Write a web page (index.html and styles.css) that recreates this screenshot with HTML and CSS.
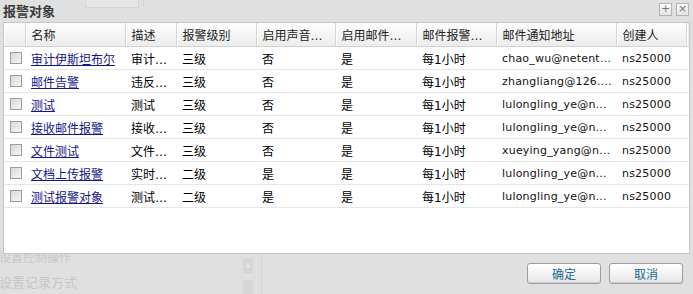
FILE: index.html
```html
<!DOCTYPE html>
<html lang="zh-CN">

<head>
    <meta charset="UTF-8">
    <title>报警对象</title>
    <link rel="stylesheet" href="styles.css">
</head>

<body>
    <!-- dimmed page behind the dialog -->
    <div class="backdrop">
        <div class="ghost-input"></div>
        <div class="ghost-line"></div>
        <div class="ghost-text ghost-ctrl">设置控制操作</div>
        <div class="ghost-text ghost-log">设置记录方式</div>
        <div class="ghost-scroll ghost-up">&#9650;</div>
        <div class="ghost-scroll ghost-thumb"></div>
        <div class="ghost-divider"></div>
    </div>

    <div class="dialog">
        <!-- Title Bar -->
        <div class="titlebar">
            <span class="title">报警对象</span>
            <div class="tools">
                <span class="tool">+</span>
                <span class="tool">&#215;</span>
            </div>
        </div>

        <!-- Alarm Object Grid -->
        <div class="grid">
            <table class="grid-table">
                <colgroup>
                    <col class="c-check">
                    <col class="c-name">
                    <col class="c-desc">
                    <col class="c-level">
                    <col class="c-sound">
                    <col class="c-mail">
                    <col class="c-freq">
                    <col class="c-addr">
                    <col class="c-owner">
                    <col>
                </colgroup>
                <thead>
                    <tr>
                        <th></th>
                        <th>名称</th>
                        <th>描述</th>
                        <th>报警级别</th>
                        <th>启用声音报警</th>
                        <th>启用邮件报警</th>
                        <th>邮件报警频率</th>
                        <th>邮件通知地址</th>
                        <th>创建人</th>
                        <th class="filler"></th>
                    </tr>
                </thead>
                <tbody>
                    <tr>
                        <td><span class="check"></span></td>
                        <td><a href="#">审计伊斯坦布尔</a></td>
                        <td>审计伊斯坦布尔</td>
                        <td>三级</td>
                        <td>否</td>
                        <td>是</td>
                        <td>每1小时</td>
                        <td class="en">chao_wu@netentsec.com</td>
                        <td class="en">ns25000</td>
                        <td></td>
                    </tr>
                    <tr>
                        <td><span class="check"></span></td>
                        <td><a href="#">邮件告警</a></td>
                        <td>违反规则</td>
                        <td>三级</td>
                        <td>否</td>
                        <td>是</td>
                        <td>每1小时</td>
                        <td class="en">zhangliang@126.com</td>
                        <td class="en">ns25000</td>
                        <td></td>
                    </tr>
                    <tr>
                        <td><span class="check"></span></td>
                        <td><a href="#">测试</a></td>
                        <td>测试</td>
                        <td>三级</td>
                        <td>否</td>
                        <td>是</td>
                        <td>每1小时</td>
                        <td class="en">lulongling_ye@netentsec.com</td>
                        <td class="en">ns25000</td>
                        <td></td>
                    </tr>
                    <tr>
                        <td><span class="check"></span></td>
                        <td><a href="#">接收邮件报警</a></td>
                        <td>接收邮件</td>
                        <td>三级</td>
                        <td>否</td>
                        <td>是</td>
                        <td>每1小时</td>
                        <td class="en">lulongling_ye@netentsec.com</td>
                        <td class="en">ns25000</td>
                        <td></td>
                    </tr>
                    <tr>
                        <td><span class="check"></span></td>
                        <td><a href="#">文件测试</a></td>
                        <td>文件测试</td>
                        <td>三级</td>
                        <td>否</td>
                        <td>是</td>
                        <td>每1小时</td>
                        <td class="en">xueying_yang@netentsec.com</td>
                        <td class="en">ns25000</td>
                        <td></td>
                    </tr>
                    <tr>
                        <td><span class="check"></span></td>
                        <td><a href="#">文档上传报警</a></td>
                        <td>实时报警</td>
                        <td>二级</td>
                        <td>是</td>
                        <td>是</td>
                        <td>每1小时</td>
                        <td class="en">lulongling_ye@netentsec.com</td>
                        <td class="en">ns25000</td>
                        <td></td>
                    </tr>
                    <tr>
                        <td><span class="check"></span></td>
                        <td><a href="#">测试报警对象</a></td>
                        <td>测试报警</td>
                        <td>二级</td>
                        <td>是</td>
                        <td>是</td>
                        <td>每1小时</td>
                        <td class="en">lulongling_ye@netentsec.com</td>
                        <td class="en">ns25000</td>
                        <td></td>
                    </tr>
                </tbody>
            </table>
        </div>

        <!-- Footer Buttons -->
        <div class="footer">
            <button class="btn">确定</button>
            <button class="btn">取消</button>
        </div>
    </div>
</body>

</html>
```

FILE: styles.css
```css
/* General Styles */
body {
    margin: 0;
    width: 693px;
    height: 294px;
    overflow: hidden;
    background-color: #e0e0e0;
    font-family: "DejaVu Sans", "Noto Sans CJK SC", sans-serif;
    font-size: 12px;
    color: #000;
    position: relative;
}

/* Backdrop (page dimmed behind the dialog) */
.backdrop {
    position: absolute;
    inset: 0;
    color: #c6c6c6;
}

.ghost-input {
    position: absolute;
    left: 85px;
    top: -4px;
    width: 52px;
    height: 10px;
    border: 1px solid #d4d4d4;
    background-color: #e6e6e6;
}

.ghost-line {
    position: absolute;
    left: 143px;
    top: 0;
    width: 1px;
    height: 6px;
    background-color: #d2d2d2;
}

.ghost-text {
    position: absolute;
    left: -1px;
    font-family: "Noto Sans CJK SC", sans-serif;
    white-space: nowrap;
}

.ghost-ctrl {
    top: 248px;
    font-size: 12px;
}

.ghost-log {
    top: 272px;
    font-size: 13px;
}

.ghost-scroll {
    position: absolute;
    left: 243px;
    width: 10px;
    background-color: #d6d6d6;
    color: #e4e4e4;
    font-size: 7px;
    text-align: center;
}

.ghost-up {
    top: 258px;
    height: 15px;
    line-height: 15px;
}

.ghost-thumb {
    top: 280px;
    height: 14px;
}

.ghost-divider {
    position: absolute;
    left: 261px;
    top: 254px;
    width: 1px;
    height: 40px;
    background-color: #d4d4d4;
}

/* Dialog */
.dialog {
    position: relative;
    display: flex;
    flex-direction: column;
    height: 294px;
}

.titlebar {
    height: 22px;
    display: flex;
    align-items: center;
    justify-content: space-between;
    padding: 0 4px 0 3px;
}

.title {
    font-family: "Noto Sans CJK SC", sans-serif;
    font-weight: bold;
    font-size: 13px;
    color: #3a3a3a;
    margin-top: -2px;
}

.tools {
    display: flex;
    gap: 4px;
    margin-top: -3px;
}

.tool {
    width: 11px;
    height: 11px;
    border: 1px solid #b4b4b4;
    background: linear-gradient(#fafafa, #e4e4e4);
    color: #777;
    font-family: "DejaVu Sans", sans-serif;
    font-size: 11px;
    line-height: 10px;
    text-align: center;
}

/* Grid */
.grid {
    margin: 0 3px;
    height: 230px;
    border: 1px solid #c6c6c6;
    background-color: #fff;
    overflow: hidden;
}

.grid-table {
    width: 100%;
    border-collapse: collapse;
    table-layout: fixed;
}

.c-check { width: 21px; }
.c-name { width: 100px; }
.c-desc { width: 51px; }
.c-level { width: 80px; }
.c-sound { width: 79px; }
.c-mail { width: 81px; }
.c-freq { width: 80px; }
.c-addr { width: 120px; }
.c-owner { width: 70px; }

.grid-table th,
.grid-table td {
    padding: 0 4px 0 6px;
    white-space: nowrap;
    overflow: hidden;
    text-overflow: ellipsis;
    text-align: left;
}

.grid-table th {
    height: 23px;
    font-weight: normal;
    color: #222;
    background: linear-gradient(#fdfdfd, #ececec);
    border-right: 1px solid #d6d6d6;
    border-bottom: 1px solid #d2d2d2;
    box-shadow: inset 1px 0 0 #fff;
}

.grid-table th.filler {
    border-right: none;
    background: #f0f0f0;
}

.grid-table td {
    height: 22px;
    border-bottom: 1px solid #e6e6e6;
}

.grid-table td.en {
    font-size: 11px;
    letter-spacing: 0.2px;
    color: #111;
}

.grid-table a {
    color: #14148c;
    text-decoration: underline;
}

.check {
    display: block;
    width: 10px;
    height: 10px;
    border: 1px solid #9c9c9c;
    background: linear-gradient(135deg, #d8d8d8, #f6f6f6);
}

/* Footer */
.footer {
    display: flex;
    justify-content: flex-end;
    gap: 8px;
    padding: 9px 10px 0 0;
}

.btn {
    width: 74px;
    height: 21px;
    padding: 0;
    border: 1px solid #9e9e9e;
    border-radius: 3px;
    background: linear-gradient(#ffffff, #e6e6e6);
    box-shadow: inset 0 -1px 0 #d0d0d0;
    color: #1d6b96;
    font-family: "Noto Sans CJK SC", sans-serif;
    font-size: 12px;
    cursor: pointer;
}
```
